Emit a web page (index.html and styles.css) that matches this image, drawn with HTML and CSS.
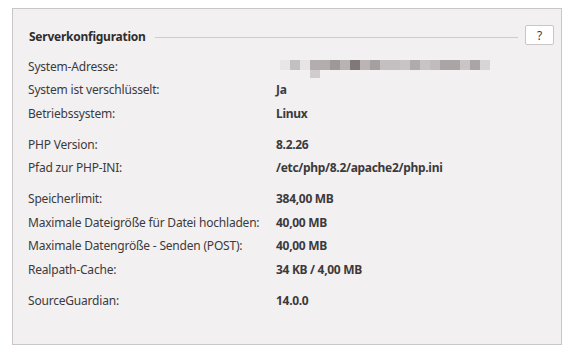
FILE: index.html
```html
<!DOCTYPE html>
<html lang="de">
<head>
  <meta charset="UTF-8">
  <meta name="viewport" content="width=device-width, initial-scale=1.0">
  <title>Serverkonfiguration</title>
  <link rel="stylesheet" href="styles.css">
</head>
<body>
  <div class="panel">
    <div class="panel-head">
      <h2>Serverkonfiguration</h2>
      <span class="rule"></span>
      <button type="button" class="help-button">?</button>
    </div>

    <div class="info-group">
      <div class="label">System-Adresse:</div>
      <div class="value"><div class="redacted"></div></div>
      <div class="label">System ist verschlüsselt:</div>
      <div class="value">Ja</div>
      <div class="label">Betriebssystem:</div>
      <div class="value">Linux</div>
    </div>

    <div class="info-group">
      <div class="label">PHP Version:</div>
      <div class="value">8.2.26</div>
      <div class="label">Pfad zur PHP-INI:</div>
      <div class="value">/etc/php/8.2/apache2/php.ini</div>
    </div>

    <div class="info-group">
      <div class="label">Speicherlimit:</div>
      <div class="value">384,00 MB</div>
      <div class="label">Maximale Dateigröße für Datei hochladen:</div>
      <div class="value">40,00 MB</div>
      <div class="label">Maximale Datengröße - Senden (POST):</div>
      <div class="value">40,00 MB</div>
      <div class="label">Realpath-Cache:</div>
      <div class="value">34 KB / 4,00 MB</div>
    </div>

    <div class="info-group">
      <div class="label">SourceGuardian:</div>
      <div class="value">14.0.0</div>
    </div>
  </div>
</body>
</html>
```

FILE: styles.css
```css
body {
  margin: 0;
  padding: 8px 14px 10px 12px;
  background-color: #ffffff;
  font-family: 'Noto Sans', sans-serif;
  font-size: 12px;
  color: #3c3a3b;
}

.panel {
  height: 337px;
  background-color: #f2f0f1;
  border: 1px solid #cac6c8;
  padding: 16px 7px 0 15px;
  box-sizing: border-box;
}

.panel-head {
  display: flex;
  align-items: center;
  height: 20px;
  margin-bottom: 9.5px;
}

.panel-head h2 {
  margin: 4px 0 0 1px;
  font-size: 12px;
  font-weight: 700;
  letter-spacing: -0.25px;
  color: #2f2d2e;
  line-height: 16px;
}

.rule {
  flex: 1;
  margin: 4px 7px 0 9px;
  border-top: 1px solid #cfcbcd;
}

.help-button {
  width: 29px;
  height: 20px;
  padding: 0;
  background-color: #ffffff;
  border: 1px solid #cac6c8;
  border-radius: 2px;
  font-family: 'Noto Sans', sans-serif;
  font-size: 12px;
  color: #3c3a3b;
  cursor: pointer;
}

.info-group {
  display: grid;
  grid-template-columns: 248px 1fr;
  grid-auto-rows: 23.5px;
  line-height: 23.5px;
  letter-spacing: -0.2px;
}

.info-group + .info-group {
  margin-top: 7.5px;
}

.value {
  font-weight: 700;
  letter-spacing: -0.3px;
}

.redacted {
  width: 210px;
  height: 18px;
  margin: 5.25px 0 0 4px;
  background:
    linear-gradient(#d0cccd, #d0cccd) 30px 10px / 10px 8px no-repeat,
    linear-gradient(to right,
      #e8e6e6 0 10px, #c4c0c1 10px 20px, #e6e4e4 20px 30px,
      #b3adae 30px 50px, #9e9899 50px 60px, #b8b2b3 60px 70px,
      #807879 70px 80px, #bab4b5 80px 90px, #a59fa0 90px 100px,
      #c4bfc0 100px 120px, #c8c4c5 120px 130px, #b0aaab 130px 140px,
      #c8c4c5 140px 150px, #c0bbbc 150px 160px, #aaa4a5 160px 180px,
      #c9c5c6 180px 190px, #aaa4a5 190px 200px, #d8d5d6 200px 210px
    ) 0 0 / 210px 10px no-repeat;
}
```
